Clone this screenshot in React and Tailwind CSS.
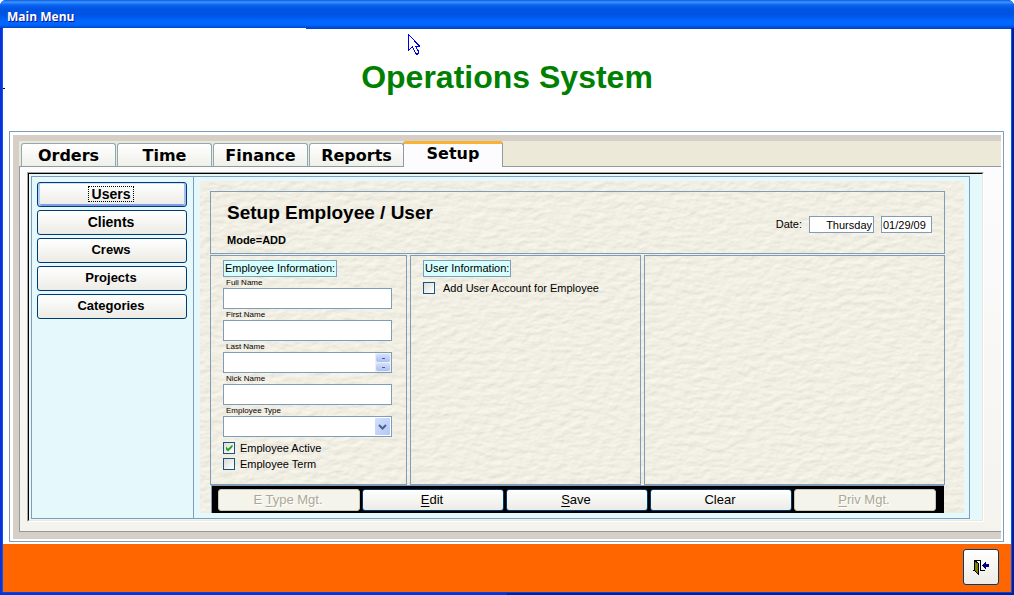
import React, { useState } from 'react';

const tabs = ['Orders', 'Time', 'Finance', 'Reports', 'Setup'];

const sideButtons = [
  { name: 'Users', size: 'text-[14px]' },
  { name: 'Clients', size: 'text-[14px]' },
  { name: 'Crews', size: 'text-[13px]' },
  { name: 'Projects', size: 'text-[13px]' },
  { name: 'Categories', size: 'text-[13px]' },
];

const actions = [
  { before: 'E ', hotkey: 'T', after: 'ype Mgt.', disabled: true },
  { before: '', hotkey: 'E', after: 'dit' },
  { before: '', hotkey: 'S', after: 'ave' },
  { before: 'Clear', hotkey: '', after: '' },
  { before: '', hotkey: 'P', after: 'riv Mgt.', disabled: true },
];

const inputClass = 'block w-full h-[21px] bg-white border border-[#7f9db9] px-1 text-[11px] outline-none rounded-none';

const TitleBar = () => (
  <header className="h-7 shrink-0 rounded-t-md bg-[linear-gradient(to_bottom,#0a5be0_0px,#3c93ff_2px,#0a64f0_5px,#0054e3_9px,#0054e3_15px,#0066ff_21px,#0066ff_25px,#0046c8_28px)] px-[7px] pt-[3px]">
    <h1 className="font-['Open_Sans',sans-serif] text-[12px] leading-[28px] font-bold text-white [text-shadow:1px_1px_0_#0f1089]">Main Menu</h1>
  </header>
);

const Paper = () => (
  <svg className="absolute inset-0 w-full h-full" aria-hidden="true">
    <filter id="paper" x="0" y="0" width="100%" height="100%" colorInterpolationFilters="sRGB">
      <feTurbulence type="fractalNoise" baseFrequency="0.09 0.17" numOctaves="3" seed="8" result="noise" />
      <feDiffuseLighting in="noise" surfaceScale="0.45" diffuseConstant="1.03" lightingColor="#f6f3e8">
        <feDistantLight azimuth="240" elevation="72" />
      </feDiffuseLighting>
    </filter>
    <rect width="100%" height="100%" filter="url(#paper)" />
  </svg>
);

const SectionTitle = ({ children }) => (
  <h3 className="inline-block h-[17px] border border-[#7f9db9] bg-[#d5ffff] px-px text-[11px] leading-[15px]">{children}</h3>
);

const Field = ({ id, label, children }) => (
  <div>
    <label htmlFor={id} className="block h-[11px] pl-[3px] text-[8px] leading-[11px]">{label}</label>
    {children || <input id={id} type="text" className={inputClass} />}
  </div>
);

const CheckBox = ({ label, defaultChecked, gap }) => (
  <label className={`flex h-4 items-center text-[11px] leading-4 ${gap}`}>
    <span className="relative flex">
      <input
        type="checkbox"
        defaultChecked={defaultChecked}
        className="peer size-3 appearance-none border border-[#1c5180] bg-linear-to-br from-[#dcdcd7] to-white"
      />
      <svg viewBox="0 0 12 12" className="pointer-events-none absolute inset-0 hidden size-3 peer-checked:block" aria-hidden="true">
        <path d="M3 4.5v3l2 2 4.500-4.500V2.500L5 6.700z" fill="#21a121" />
      </svg>
    </span>
    {label}
  </label>
);

const SpinButton = ({ label }) => (
  <button type="button" aria-label={label} className="flex h-2 w-[14px] items-center justify-center rounded-[2px] bg-linear-to-b from-[#d5e0fe] to-[#a9c0f5]">
    <span className="h-px w-[3px] bg-[#4d6185]" />
  </button>
);

const EmployeeColumn = () => (
  <section className="border border-[#7f9db9] pt-1 pr-[14px] pl-3">
    <div className="flex h-[17px]">
      <SectionTitle>Employee Information:</SectionTitle>
    </div>
    <Field id="fullName" label="Full Name" />
    <Field id="firstName" label="First Name" />
    <Field id="lastName" label="Last Name">
      <div className="flex h-[21px] border border-[#7f9db9] bg-white">
        <input id="lastName" type="text" className="min-w-0 flex-1 px-1 text-[11px] outline-none" />
        <div className="flex flex-col justify-between bg-[#f0f0ea] px-px py-px">
          <SpinButton label="Previous" />
          <SpinButton label="Next" />
        </div>
      </div>
    </Field>
    <Field id="nickName" label="Nick Name" />
    <Field id="employeeType" label="Employee Type">
      <div className="relative">
        <select id="employeeType" className={`${inputClass} appearance-none`}>
          <option></option>
        </select>
        <span className="pointer-events-none absolute top-[2px] right-[2px] flex h-[17px] w-[15px] items-center justify-center rounded-[1px] bg-linear-to-br from-[#d3e0fd] to-[#b0c8f8]">
          <svg width="9" height="6" viewBox="0 0 9 6" fill="none" aria-hidden="true">
            <path d="M1 1l3.500 3.500L8 1" stroke="#4d6185" strokeWidth="2" />
          </svg>
        </span>
      </div>
    </Field>
    <div className="pt-[3px]">
      <CheckBox label="Employee Active" defaultChecked gap="gap-[5px]" />
      <CheckBox label="Employee Term" gap="gap-[5px]" />
    </div>
  </section>
);

const SetupForm = () => (
  <form className="relative flex flex-1 flex-col pt-[10px] pr-[19px] pl-[10px]" onSubmit={(e) => e.preventDefault()}>
    <Paper />
    <div className="relative flex flex-1 flex-col">
      <div className="flex h-[63px] justify-between border border-[#7f9db9] pr-3 pl-4">
        <div>
          <h2 className="pt-2 text-[19px] leading-[26px] font-bold">Setup Employee / User</h2>
          <p className="pt-[6px] text-[11px] leading-4 font-bold">Mode=ADD</p>
        </div>
        <div className="flex items-center gap-[7px] pt-1 text-[11px]">
          <label htmlFor="weekday">Date:</label>
          <input id="weekday" readOnly defaultValue="Thursday" className="h-[17px] w-[65px] border border-[#7f9db9] bg-white px-px text-right" />
          <input aria-label="Date" readOnly defaultValue="01/29/09" className="h-[17px] w-[51px] border border-[#7f9db9] bg-white px-px" />
        </div>
      </div>

      <div className="mt-px grid flex-1 grid-cols-[197px_231px_1fr] gap-[3px]">
        <EmployeeColumn />
        <section className="border border-[#7f9db9] px-3 pt-1">
          <div className="flex h-[17px]">
            <SectionTitle>User Information:</SectionTitle>
          </div>
          <div className="pt-[3px]">
            <CheckBox label="Add User Account for Employee" gap="gap-2" />
          </div>
        </section>
        <section className="border border-[#7f9db9]" />
      </div>

      {/* Form actions */}
      <div className="mr-px ml-px grid grid-cols-5 gap-[2px] border-t border-l border-[#7f9db9] bg-black pt-[3px] pr-2 pb-[2px] pl-[6px]">
        {actions.map((a) => (
          <button
            key={a.hotkey + a.after + a.before}
            type="button"
            disabled={a.disabled}
            className="h-[22px] rounded-[3px] border border-[#003c74] bg-linear-to-b from-white to-[#ecebe5] pr-[2px] pb-px text-[13px] leading-[18px] disabled:border-[#c9c7ba] disabled:bg-[#f5f4ea] disabled:bg-none disabled:text-[#aca899] disabled:[text-shadow:1px_1px_0_#fff]"
          >
            {a.before}<span className="underline underline-offset-2">{a.hotkey}</span>{a.after}
          </button>
        ))}
      </div>
    </div>
  </form>
);

const Sidebar = () => {
  const [active, setActive] = useState('Users');

  return (
    <nav className="flex w-[162px] shrink-0 flex-col gap-[3px] border-r border-[#7f9db9] py-[5px] pr-[6px] pl-[5px]">
      {sideButtons.map((b) => (
        <button
          key={b.name}
          type="button"
          onClick={() => setActive(b.name)}
          className={`flex h-[25px] items-center justify-center rounded-[3px] border border-[#003c74] bg-linear-to-b from-white to-[#ecebe5] pr-[2px] pb-px font-bold ${b.size} ${active === b.name ? 'shadow-[inset_2px_0_0_#b4cbf8,inset_-2px_0_0_#a4bdf4,inset_0_-2px_0_#7f9ce8,inset_0_1px_0_#cee0ff]' : ''}`}
        >
          <span className={active === b.name ? 'border border-dotted border-black px-[3px] leading-[14px]' : 'leading-[14px]'}>{b.name}</span>
        </button>
      ))}
    </nav>
  );
};

const TabStrip = () => {
  const [active, setActive] = useState('Setup');

  return (
    <div role="tablist" className="flex h-[25px] items-end gap-px bg-[#ece9d8] pl-[2px] font-['DejaVu_Sans',sans-serif] text-[16px] font-bold">
      {tabs.map((tab) =>
        active === tab ? (
          <button key={tab} role="tab" aria-selected="true" className="relative z-10 -mb-px -ml-[2px] h-[26px] w-[100px] rounded-t-[3px] border-x border-t-3 border-x-[#919b9c] border-t-[#f9b233] bg-[#fcfcfe] pb-[3px] leading-[20px]">
            {tab}
          </button>
        ) : (
          <button key={tab} role="tab" aria-selected="false" onClick={() => setActive(tab)} className="h-[23px] w-[95px] rounded-t-[3px] border border-b-0 border-[#91a7b4] bg-linear-to-b from-white to-[#f0f0ea] pt-px leading-[22px]">
            {tab}
          </button>
        )
      )}
    </div>
  );
};

const Pointer = () => (
  <svg className="absolute top-[34px] left-[408px]" width="12" height="21" viewBox="0 0 12 21" fill="none" shapeRendering="crispEdges" aria-hidden="true">
    <path d="M.5.5v16l4-4 3 6.500 1 1h1l1-1v-1.500l-3-5.500h4z" fill="#fff" stroke="#0000e0" />
  </svg>
);

const ExitIcon = () => (
  <svg width="16" height="16" viewBox="0 0 16 16" shapeRendering="crispEdges" aria-hidden="true">
    <path d="M0 11.500h2M7 11.500h5" stroke="#000" />
    <path d="M1.500 11.500v-10h6v10" fill="#fff" stroke="#000" />
    <path d="M1.500 1.500l4 3v11l-4-4z" fill="#808000" stroke="#000" />
    <path d="M9 6.500l4-4v2.500h3v3h-3v2.500z" fill="#000080" />
  </svg>
);

export default function App() {
  return (
    <div className="bg-white font-['Liberation_Sans',Arial,sans-serif] text-black">
      <div className="relative flex min-h-screen flex-col rounded-t-md bg-linear-to-r from-[#0831d9] from-50% to-[#001ea0] to-50%">
        <TitleBar />
        <div className="mx-[3px] h-px bg-[#0046c8]">
          <div className="h-px w-[303px] bg-white" />
        </div>
        <div className="mx-[2px] mb-[2px] flex flex-1 flex-col border-x border-b border-x-[#0855f0] border-b-[#0046e0] bg-white">
          <div className="relative flex h-[102px] items-center justify-center">
            <h2 className="pb-[6px] text-[32px] leading-none font-bold text-[#008000]">Operations System</h2>
            <span className="absolute top-[59px] left-0 h-px w-[2px] bg-black" />
          </div>

          <main className="mr-[7px] mb-[2px] ml-[6px] flex flex-1 flex-col border border-[#7f9db9] pt-[3px] pr-[2px] pb-[2px] pl-[3px]">
            <div className="flex flex-1 flex-col bg-[#d6cfc8] pt-[6px] pb-[7px] pl-[6px]">
              <TabStrip />
              <div className="flex flex-1 flex-col border border-r-0 border-[#919b9c] bg-linear-to-b from-[#fcfcfe] to-[#f4f3ee] pt-[5px] pr-[17px] pb-[9px] pl-[7px]">
                <div className="flex flex-1 border border-t-[#aca899] border-r-white border-b-white border-l-[#aca899]">
                  <div className="flex flex-1 border border-t-black border-r-[#ece9d8] border-b-[#ece9d8] border-l-black bg-[#e5f8fc] pt-[2px] pr-3 pb-px pl-[2px]">
                    <div className="flex flex-1 border border-[#7f9db9]">
                      <Sidebar />
                      <div className="flex flex-1 pt-1 pr-[5px] pb-[5px] pl-[6px]">
                        <SetupForm />
                      </div>
                    </div>
                  </div>
                </div>
              </div>
            </div>
          </main>

          <footer className="flex h-12 items-start justify-end bg-[#ff6600] pt-[5px] pr-3">
            <button type="button" aria-label="Exit" className="flex size-9 items-center justify-center rounded-[3px] border border-[#003c74] bg-linear-to-b from-white to-[#ecebe5]">
              <ExitIcon />
            </button>
          </footer>
        </div>
        <Pointer />
      </div>
    </div>
  );
}
